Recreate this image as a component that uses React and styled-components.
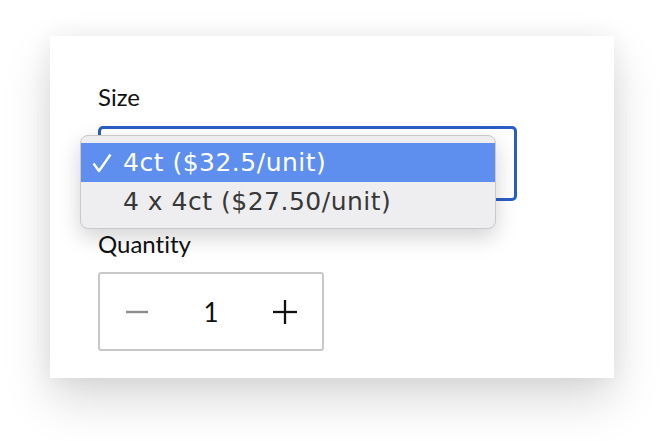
import React from "react";
import styled, { createGlobalStyle } from "styled-components";

const GlobalStyle = createGlobalStyle`
  html, body {
    margin: 0;
    padding: 0;
    background: #ffffff;
  }
  body {
    font-family: "Lato", "Open Sans", sans-serif;
    font-variant-ligatures: none;
  }
`;

const options = [
  { label: "4ct ($32.5/unit)", selected: true },
  { label: "4 x 4ct ($27.50/unit)", selected: false },
];

const App = () => {
  return (
    <>
      <GlobalStyle />
      <Page>
        <Card>
          <Label>Size</Label>
          <SelectWrap>
            {/* the native select sits under its open popup, so its value is hidden */}
            <SelectBox />
            <Menu>
              {options.map((opt) => (
                <Option key={opt.label} selected={opt.selected}>
                  <CheckCell>
                    {opt.selected && (
                      <svg width="20" height="20" viewBox="0 0 20 20">
                        <polyline
                          points="1.5,10.5 7,18 18.5,1.5"
                          fill="none"
                          stroke="#ffffff"
                          strokeWidth="2.4"
                          strokeLinejoin="round"
                        />
                      </svg>
                    )}
                  </CheckCell>
                  <span>{opt.label}</span>
                </Option>
              ))}
            </Menu>
          </SelectWrap>
          <Label second>Quantity</Label>
          <Stepper>
            <StepButton aria-label="decrease">
              <svg width="22" height="4" viewBox="0 0 22 4">
                <line x1="0" y1="2" x2="22" y2="2" stroke="#8c8c8c" strokeWidth="2.4" />
              </svg>
            </StepButton>
            <Count>1</Count>
            <StepButton aria-label="increase">
              <svg width="24" height="24" viewBox="0 0 24 24">
                <line x1="0" y1="12" x2="24" y2="12" stroke="#111" strokeWidth="2.3" />
                <line x1="12" y1="0" x2="12" y2="24" stroke="#111" strokeWidth="2.3" />
              </svg>
            </StepButton>
          </Stepper>
        </Card>
      </Page>
    </>
  );
};

const Page = styled.div`
  width: 664px;
  height: 442px;
  padding: 36px 0 0 50px;
  box-sizing: border-box;
  overflow: hidden;
`;

const Card = styled.div`
  width: 564px;
  height: 342px;
  box-sizing: border-box;
  background: #ffffff;
  padding: 46px 0 27px 48px;
  display: flex;
  flex-direction: column;
  box-shadow: 0 22px 44px rgba(0, 0, 0, 0.15), 0 0 22px rgba(0, 0, 0, 0.06);
`;

const Label = styled.div`
  font-family: "Lato", sans-serif;
  font-size: 24px;
  line-height: 29px;
  color: #111;
  margin-top: ${(p) => (p.second ? "28px" : "0")};
`;

const SelectWrap = styled.div`
  position: relative;
  margin-top: 15px;
  width: 419px;
`;

const SelectBox = styled.div`
  height: 75px;
  box-sizing: border-box;
  border: 3px solid #2b5ec4;
  border-radius: 5px;
`;

const Menu = styled.div`
  position: absolute;
  left: -18px;
  top: 9px;
  width: 416px;
  box-sizing: border-box;
  padding: 7px 0;
  background: #eeeef0;
  border: 1px solid #c9c9cc;
  border-radius: 8px;
  box-shadow: 0 8px 22px rgba(0, 0, 0, 0.18);
  overflow: hidden;
`;

const Option = styled.div`
  display: flex;
  align-items: center;
  height: 39px;
  line-height: 39px;
  font-family: "DejaVu Sans", sans-serif;
  font-size: 25px;
  letter-spacing: 0.5px;
  color: ${(p) => (p.selected ? "#ffffff" : "#383838")};
  background: ${(p) => (p.selected ? "#5e8fee" : "transparent")};
  white-space: nowrap;
`;

const CheckCell = styled.div`
  width: 42px;
  box-sizing: border-box;
  padding-left: 11px;
  display: flex;
  align-items: center;
  height: 100%;
`;

const Stepper = styled.div`
  margin-top: 14px;
  width: 226px;
  height: 79px;
  box-sizing: border-box;
  border: 2px solid #c8c8c8;
  border-radius: 3px;
  display: grid;
  grid-template-columns: repeat(3, 1fr);
  align-items: center;
  justify-items: center;
`;

const StepButton = styled.div`
  display: flex;
  align-items: center;
  justify-content: center;
`;

const Count = styled.div`
  font-family: "Lato", sans-serif;
  font-size: 26px;
  color: #111;
`;

export default App;
